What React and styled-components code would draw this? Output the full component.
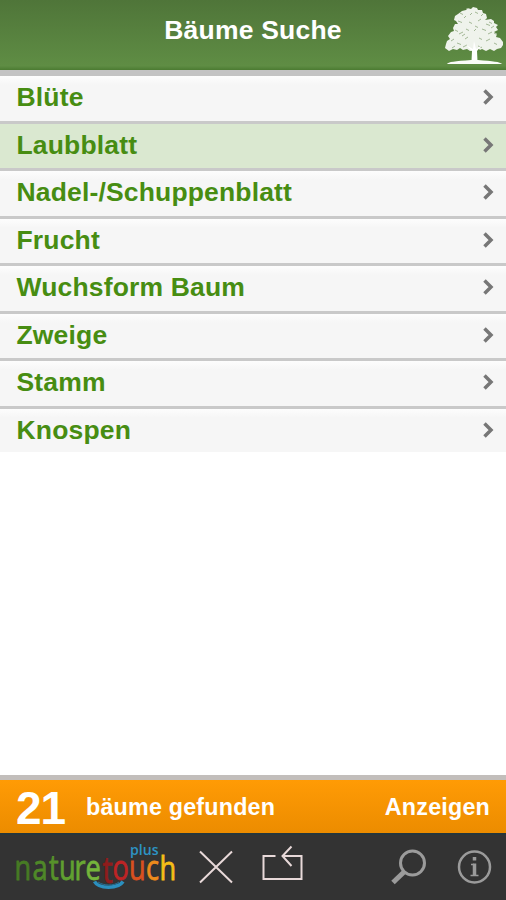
import React from 'react';
import styled, { createGlobalStyle, css } from 'styled-components';

const GlobalStyle = createGlobalStyle`
  body {
    margin: 0;
    background: #fff;
    font-family: "Liberation Sans", Arial, sans-serif;
  }
`;

const Screen = styled.div`
  display: flex;
  flex-direction: column;
  width: 506px;
  height: 900px;
  overflow: hidden;
`;

const Header = styled.header`
  display: grid;
  grid-template-columns: 62px 1fr 62px;
  align-items: center;
  height: 70px;
  flex: none;
  background: linear-gradient(#4f7539, #5f8d44 94%, #4c7b32);
  border-bottom: 6px solid #c3c3c3;
`;

const Title = styled.h1`
  grid-column: 2;
  margin: 0;
  padding-bottom: 11px;
  color: #fff;
  font-size: 26.5px;
  line-height: 30px;
  letter-spacing: 0.2px;
  text-align: center;
`;

const List = styled.ul`
  flex: 1;
  margin: 0;
  padding: 0;
  list-style: none;
`;

const Row = styled.li`
  display: flex;
  align-items: center;
  justify-content: space-between;
  box-sizing: border-box;
  height: 47.5px;
  padding: 0 10px 2.5px 16.5px;
  border-bottom: 3px solid #c9c9c9;
  background: linear-gradient(#fdfdfd, #f6f6f6 20%);
  color: #478d12;
  font-size: 26.5px;
  line-height: 30px;
  font-weight: bold;
  letter-spacing: 0.16px;

  &:last-child {
    height: 43.5px;
    padding-bottom: 1.5px;
    border-bottom: 0;
  }

  ${props => props.$active && css`
    background: #dae8d0;
  `}
`;

const ResultBar = styled.div`
  display: flex;
  align-items: center;
  box-sizing: border-box;
  height: 58px;
  flex: none;
  padding: 1px 16px 0 16px;
  border-top: 5px solid #c2bebb;
  background: linear-gradient(#ff9b05, #ec8c00);
  color: #fff;
  font-size: 23.3px;
  font-weight: bold;
  letter-spacing: 0.2px;
`;

const Count = styled.span`
  width: 70px;
  padding-top: 2px;
  font-size: 46px;
  line-height: 50px;
  letter-spacing: -1px;
`;

const ShowLink = styled.span`
  margin-left: auto;
`;

const Toolbar = styled.footer`
  display: flex;
  align-items: center;
  box-sizing: border-box;
  height: 67px;
  flex: none;
  border-top: 2px solid #26363b;
  background: #333;

  svg {
    display: block;
    flex: none;
  }
`;

const Spacer = styled.div`
  flex: 1;
`;

const items = [
  'Blüte',
  'Laubblatt',
  'Nadel-/Schuppenblatt',
  'Frucht',
  'Wuchsform Baum',
  'Zweige',
  'Stamm',
  'Knospen',
];

// letter, x, colour
const logoLetters = [
  ['n', 14, '#477a24'],
  ['a', 32, '#4f8828'],
  ['t', 48.5, '#57922a'],
  ['u', 58.5, '#60a030'],
  ['r', 74, '#68a832'],
  ['e', 85, '#75b53b'],
  ['t', 102, '#8f1c1c'],
  ['o', 112, '#bd2425'],
  ['u', 128.5, '#d9501f'],
  ['c', 145.5, '#ed8b1c'],
  ['h', 159, '#f5bd17'],
];

// gaps between the leaves: x, y, length
const gaps = [
  [16, 13, 3], [22, 10, 2], [31, 12, 3], [37, 16, 2], [14, 21, 4], [20, 18, 2],
  [25, 22, 3], [34, 21, 3], [42, 24, 4], [47, 28, 3], [11, 30, 3], [15, 34, 4],
  [22, 29, 3], [30, 31, 2], [38, 29, 4], [44, 34, 4], [50, 33, 3], [7, 41, 3],
  [13, 43, 4], [21, 39, 3], [35, 38, 3], [42, 41, 4], [50, 43, 3], [26, 15, 2],
  [31, 26, 3], [18, 36, 3], [34, 46, 4], [19, 47, 4], [45, 22, 3], [8, 48, 3],
];

function Tree() {
  return (
    <svg width="62" height="70" viewBox="0 0 62 70">
      <path
        fill="#eff3ec"
        d="M18 11l4-1 1-2 4 1 2-2 4 1 1 2 4 0 1 3 3 1 1 4-2 2 6-1 3 2 0 2 4 2-2 2 2 3-4 2 3 2-1 3 4 1 3 4 0 3-2 3-4 1-3 2-4-2-4 2-4-2-2 1-2-2-2 2-6 1-3-2-4 1-3-2-3 2-4-1-4 2-4-3 1-4 1-3 3-2-2-3 3-4 3-1-1-3 2-4 3 0-2-3-2-1 1-4 3-2z"
      />
      <g stroke="#a3b896" strokeWidth="1" fill="none">
        {gaps.map(([x, y, len], i) => (
          <path key={i} d={`M${x} ${y}l${len} ${i % 2 ? -2 : 1.5}`} />
        ))}
      </g>
      <path d="M27.500 61l.5-10-6-6 7 4 1-8 2 8 6-4-5 6 .5 10z" fill="#fff" />
      <path d="M3 64c1-2 8-3 24-4h7c15 1 22 2 24 4z" fill="#fafcf8" />
    </svg>
  );
}

function Chevron() {
  return (
    <svg width="15" height="18" viewBox="0 0 15 18">
      <path d="M3.500 2.500l6.500 6.500-6.500 6.500" fill="none" stroke="#777" strokeWidth="3.500" />
    </svg>
  );
}

function Logo() {
  return (
    <svg width="190" height="65" viewBox="0 835 190 65">
      <g fontFamily='"Open Sans", "Noto Sans", sans-serif'>
        {logoLetters.map(([letter, x, color], i) => (
          <text
            key={i}
            transform={`translate(${x + 0.5} ${i === 6 ? 883 : 879.5}) scale(0.8 ${i === 10 ? 0.94 : 1})`}
            fontSize={i === 6 ? 36 : 34}
            fill={color}
            stroke={color}
            strokeWidth="0.8"
          >
            {letter}
          </text>
        ))}
        <text x="130" y="855" fontSize="14" fontWeight="600" fill="#2d94c4" textLength="28.500" lengthAdjust="spacingAndGlyphs">plus</text>
      </g>
      <path d="M94.500 881.500c4 7.500 24 7.500 28.500 0" fill="none" stroke="#2b8fbe" strokeWidth="3.500" />
      <path d="M98 882c6 4 16 4 21 0" fill="none" stroke="#266f93" strokeWidth="1" />
    </svg>
  );
}

function App() {
  return (
    <Screen>
      <GlobalStyle />
      <Header>
        <Title>Bäume Suche</Title>
        <Tree />
      </Header>
      <List>
        {items.map((item, i) => (
          <Row key={item} $active={i === 1}>
            {item}
            <Chevron />
          </Row>
        ))}
      </List>
      <ResultBar>
        <Count>21</Count>
        bäume gefunden
        <ShowLink>Anzeigen</ShowLink>
      </ResultBar>
      <Toolbar>
        <Logo />
        <svg width="130" height="65" viewBox="190 835 130 65" fill="none" stroke="#e8d9d9" strokeWidth="2">
          <path d="M200 851.500l32 31M232 851.500l-32 31" />
          <path d="M275.500 856H263.500V879H301.500V856H284M291.500 846.500l-9 9.500 9 10" />
        </svg>
        <Spacer />
        <svg width="120" height="65" viewBox="386 835 120 65" fill="none" stroke="#9b9b9b">
          <circle cx="412.500" cy="863" r="12" strokeWidth="3" />
          <path d="M404 872l-11 10.500" strokeWidth="5" />
          <circle cx="474.500" cy="867" r="15.500" strokeWidth="2.500" />
          <path d="M474.500 863.500v12.500M474.500 857v3.500" strokeWidth="3.500" />
          <path d="M471 864.500h3M470.500 875.500h8" strokeWidth="1.500" />
        </svg>
      </Toolbar>
    </Screen>
  );
}

export default App;
